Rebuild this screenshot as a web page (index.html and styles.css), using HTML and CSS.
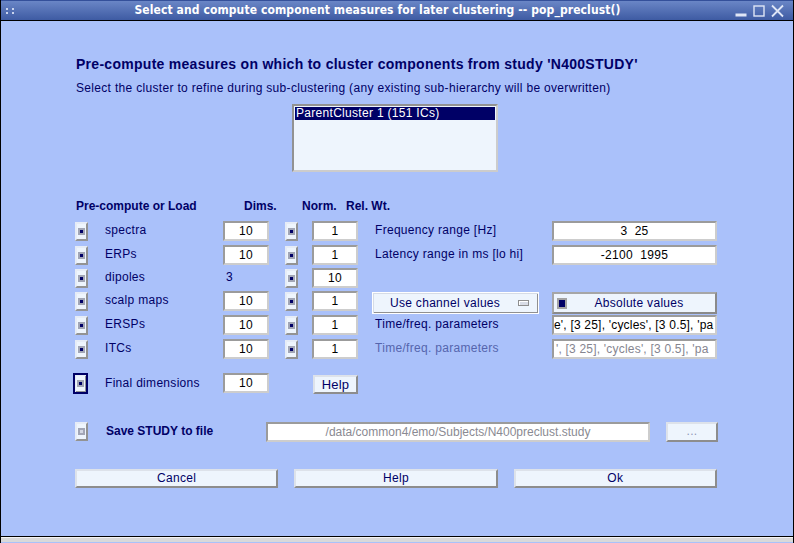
FILE: index.html
```html
<!DOCTYPE html>
<html>
<head>
<meta charset="utf-8">
<link rel="stylesheet" href="styles.css">
</head>
<body>
<div class="window">
  <div class="titlebar">
    <div class="tb-grip">
      <svg width="10" height="6" viewBox="0 0 10 6"><rect x="0" y="0" width="2" height="2"/><rect x="6" y="0" width="2" height="2"/><rect x="0" y="4" width="2" height="2"/><rect x="6" y="4" width="2" height="2"/></svg>
    </div>
    <div class="tb-title">Select and compute component measures for later clustering -- pop_preclust()</div>
    <div class="tb-buttons">
      <svg width="12" height="14" viewBox="0 0 12 14"><rect x="1" y="10" width="10" height="2"/></svg>
      <svg width="12" height="14" viewBox="0 0 12 14"><rect x="1" y="2" width="10" height="10" fill="none" stroke-width="1.4"/></svg>
      <svg width="13" height="14" viewBox="0 0 13 14"><path d="M1 1.5 L12 12.5 M12 1.5 L1 12.5" fill="none" stroke-width="1.8"/></svg>
    </div>
  </div>
  <div class="content">
    <h1 class="heading">Pre-compute measures on which to cluster components from study 'N400STUDY'</h1>
    <p class="subheading">Select the cluster to refine during sub-clustering (any existing sub-hierarchy will be overwritten)</p>
    <div class="listbox">
      <div class="list-item selected">ParentCluster 1 (151 ICs)</div>
    </div>

    <div class="measures">
      <div class="hdr hdr-load">Pre-compute or Load</div>
      <div class="hdr hdr-dims">Dims.</div>
      <div class="hdr hdr-norm">Norm.</div>
      <div class="hdr hdr-wt">Rel. Wt.</div>
      <div class="spacer"></div>
      <div class="spacer"></div>

      <div class="chk"><i></i></div>
      <div class="lbl">spectra</div>
      <div class="field">10</div>
      <div class="chk chk-norm"><i></i></div>
      <div class="field">1</div>
      <div class="lbl lbl-right">Frequency range [Hz]</div>
      <div class="field">3&nbsp;&nbsp;25</div>

      <div class="chk"><i></i></div>
      <div class="lbl">ERPs</div>
      <div class="field">10</div>
      <div class="chk chk-norm"><i></i></div>
      <div class="field">1</div>
      <div class="lbl lbl-right">Latency range in ms [lo hi]</div>
      <div class="field">-2100&nbsp;&nbsp;1995</div>

      <div class="chk"><i></i></div>
      <div class="lbl">dipoles</div>
      <div class="lbl lbl-num">3</div>
      <div class="chk chk-norm"><i></i></div>
      <div class="field">10</div>
      <div class="spacer"></div>
      <div class="spacer"></div>

      <div class="chk"><i></i></div>
      <div class="lbl">scalp maps</div>
      <div class="field">10</div>
      <div class="chk chk-norm"><i></i></div>
      <div class="field">1</div>
      <div class="menubtn"><span>Use channel values</span><b class="menu-ind"></b></div>
      <div class="togglebtn"><b class="tog-ind"></b><span>Absolute values</span></div>

      <div class="chk"><i></i></div>
      <div class="lbl">ERSPs</div>
      <div class="field">10</div>
      <div class="chk chk-norm"><i></i></div>
      <div class="field">1</div>
      <div class="lbl lbl-right">Time/freq. parameters</div>
      <div class="field field-left">e', [3 25], 'cycles', [3 0.5], 'pa</div>

      <div class="chk"><i></i></div>
      <div class="lbl">ITCs</div>
      <div class="field">10</div>
      <div class="chk chk-norm"><i></i></div>
      <div class="field">1</div>
      <div class="lbl lbl-right disabled">Time/freq. parameters</div>
      <div class="field field-left field-disabled">', [3 25], 'cycles', [3 0.5], 'pa</div>

      <div class="chk chk-focus"><i></i></div>
      <div class="lbl lbl-final">Final dimensions</div>
      <div class="field">10</div>
      <div class="spacer"></div>
      <div class="btn btn-help">Help</div>
      <div class="spacer"></div>
      <div class="spacer"></div>
    </div>

    <div class="save-row">
      <div class="chk chk-off"><i></i></div>
      <div class="save-lbl">Save STUDY to file</div>
      <div class="field field-path">/data/common4/emo/Subjects/N400preclust.study</div>
      <div class="btn btn-browse">...</div>
    </div>

    <div class="actions">
      <div class="btn">Cancel</div>
      <div class="btn">Help</div>
      <div class="btn">Ok</div>
    </div>
  </div>
  <div class="bottom-edge"></div>
</div>
</body>
</html>
```

FILE: styles.css
```css
* { box-sizing: border-box; }
html, body { margin: 0; padding: 0; }
body {
  width: 794px;
  height: 543px;
  overflow: hidden;
  font-family: "Liberation Sans", Arial, sans-serif;
  font-size: 12px;
  letter-spacing: 0.3px;
  color: #000066;
  background: #aac1fa;
}
.window {
  width: 794px;
  height: 543px;
  border-left: 1px solid #000;
  border-right: 1px solid #000;
  display: flex;
  flex-direction: column;
}
.titlebar {
  height: 21px;
  flex: none;
  background: linear-gradient(#6a86c6, #3e5ba3);
  border-top: 1px solid #34509a;
  border-bottom: 1px solid #000;
  display: flex;
  align-items: center;
  color: #fff;
  letter-spacing: 0;
}
.tb-grip { width: 19px; padding-left: 5px; display: flex; align-items: center; height: 100%; padding-top: 1px; }
.tb-grip svg { fill: #c9d4ee; }
.tb-title {
  flex: 1;
  text-align: center;
  font-family: "DejaVu Sans Condensed", "DejaVu Sans", sans-serif;
  font-stretch: condensed;
  font-weight: bold;
  font-size: 12px;
  letter-spacing: 0.1px;
  line-height: 19px;
  white-space: nowrap;
  padding-left: 0;
}
.tb-buttons { display: flex; align-items: center; gap: 6px; padding-right: 3px; padding-top: 1px; width: 58px; }
.tb-buttons svg { fill: #dfe6f6; stroke: #dfe6f6; }

.content {
  height: 516px;
  flex: none;
  border-bottom: 1px solid #000;
  background: #aac1fa;
}
.bottom-edge {
  height: 5px;
  flex: none;
  background: #d9d9d9;
  border-top: 1px solid #f4f4f4;
}

.heading {
  margin: 35px 0 0 75px;
  font-size: 14px;
  letter-spacing: 0.28px;
  line-height: 16px;
  font-weight: bold;
  white-space: nowrap;
}
.subheading {
  margin: 9px 0 0 75px;
  font-size: 12px;
  letter-spacing: 0.32px;
  line-height: 14px;
  white-space: nowrap;
}
.listbox {
  margin: 9px 0 0 291px;
  width: 206px;
  height: 68px;
  background: #eef5fd;
  border: 2px solid;
  border-color: #929292 #cccccc #cccccc #929292;
  padding: 1px 1px;
}
.list-item {
  height: 13px;
  line-height: 13px;
  padding-left: 1px;
  white-space: nowrap;
}
.list-item.selected { background: #000066; color: #fff; }

.measures {
  margin: 27px 0 0 72px;
  width: 644px;
  display: grid;
  grid-template-columns: 32px 118px 46px 43px 46px 194px 165px;
  grid-template-rows: 22px 24px 23px 23px 24px 24px 34px 22px;
  align-items: start;
}
.hdr { font-weight: bold; white-space: nowrap; line-height: 14px; letter-spacing: 0; }
.hdr-load { grid-column: 1 / 3; padding-left: 3px; }
.hdr-dims { padding-left: 21px; }
.hdr-norm { padding-left: 33px; }
.hdr-wt { padding-left: 34px; }

.chk {
  width: 13px;
  height: 19px;
  margin-left: 2px;
  margin-top: 1px;
  background: #eef5fd;
  border: 2px solid;
  border-color: #e6ecf6 #939393 #939393 #e6ecf6;
  display: flex;
  align-items: center;
  justify-content: center;
}
.chk i {
  display: block;
  width: 7px;
  height: 7px;
  background: #000066;
  border: 2px solid #a2a6b6;
}
.chk-norm { margin-left: 16px; }
.chk-focus {
  width: 15px;
  height: 21px;
  margin-left: 0;
  margin-top: 0;
  border: 2px solid #000066;
  box-shadow: inset 1px 1px 0 #e6ecf6, inset -1px -1px 0 #939393;
}
.chk-off i { background: #d4d8e4; border-color: #a2a6b6; }

.lbl { line-height: 14px; padding-top: 2px; white-space: nowrap; }
.lbl-num { padding-left: 3px; }
.lbl-right { padding-left: 17px; }
.lbl-final { padding-top: 3px; }
.disabled { color: #5565ad; }

.field {
  height: 20px;
  background: #fff;
  border: 2px solid;
  border-color: #9b9b9b #cdcdcd #cdcdcd #9b9b9b;
  line-height: 16px;
  text-align: center;
  white-space: nowrap;
  overflow: hidden;
  color: #000;
}
.field-left { text-align: left; padding-left: 0; letter-spacing: 0.2px; }
.field-disabled { color: #858590; padding-left: 2px; }

.btn {
  height: 19px;
  background: #eef5fd;
  border: 2px solid;
  border-color: #dde2ea #8d8d8d #8d8d8d #dde2ea;
  text-align: center;
  line-height: 15px;
  white-space: nowrap;
}
.btn-help { margin-top: 2px; margin-left: 1px; width: 45px; font-size: 13px; letter-spacing: 0.2px; }

.menubtn {
  margin-left: 14px;
  margin-top: 1px;
  width: 167px;
  height: 22px;
  background: #eef5fd;
  border: 1px solid #ffffff;
  box-shadow: inset 1px 1px 0 #d6dce6, inset -1px -1px 0 #909090;
  display: flex;
  align-items: center;
  padding-left: 17px;
  padding-right: 9px;
}
.menubtn span { flex: 1; text-align: left; }
.menu-ind {
  width: 11px;
  height: 6px;
  border: 1px solid #8e8e8e;
  background: #d8dce6;
  box-shadow: inset 1px 1px 0 #fff;
}
.togglebtn {
  margin-top: 1px;
  height: 22px;
  background: #eef5fd;
  border: 2px solid;
  border-color: #a6a6a6 #8a8a8a #8a8a8a #a6a6a6;
  display: flex;
  align-items: center;
  padding-left: 3px;
}
.togglebtn span { flex: 1; text-align: center; padding-right: 4px; }
.tog-ind {
  width: 10px;
  height: 11px;
  background: #000066;
  border: 2px solid #a3a3a3;
}

.save-row {
  margin: 27px 0 0 74px;
  display: flex;
  align-items: flex-start;
  height: 20px;
}
.save-row .chk { margin-left: 0; margin-top: 0; }
.save-lbl { font-weight: bold; margin-left: 18px; width: 160px; line-height: 14px; padding-top: 2px; white-space: nowrap; letter-spacing: 0; }
.field-path { width: 384px; height: 20px; color: #8a8a92; letter-spacing: 0; }
.btn-browse { margin-left: 16px; width: 52px; height: 20px; color: #9098b8; }

.actions {
  margin: 27px 0 0 74px;
  width: 642px;
  display: grid;
  grid-template-columns: 1fr 1fr 1fr;
  column-gap: 16px;
}
```
